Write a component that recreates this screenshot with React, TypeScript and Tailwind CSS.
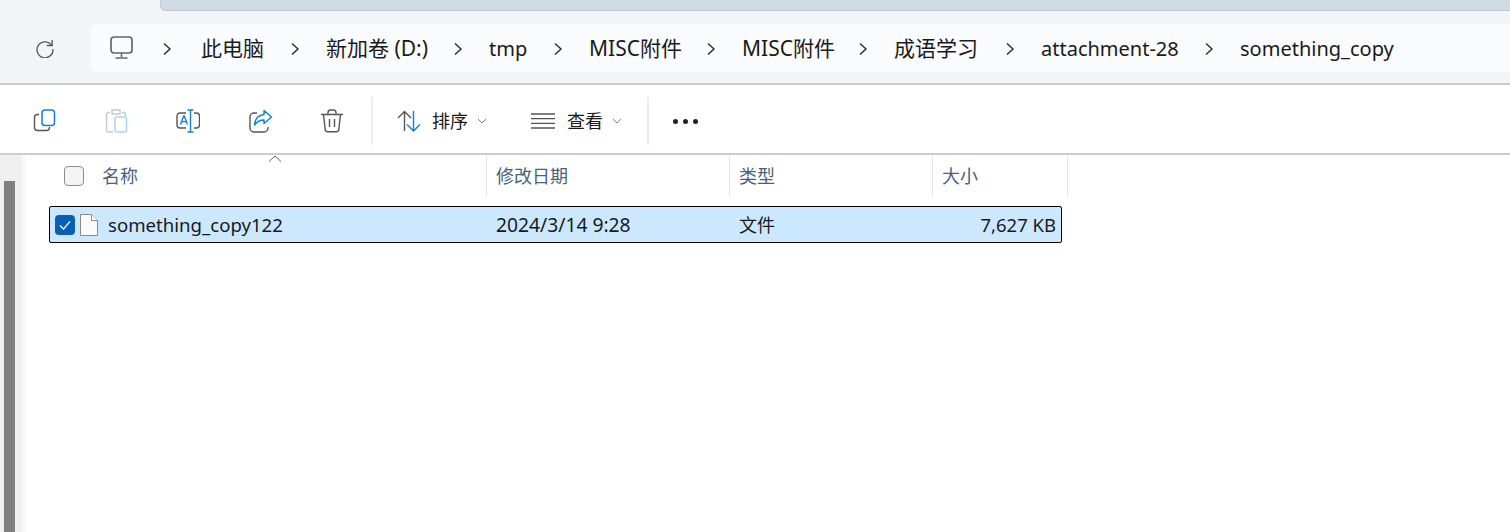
const FONT = '"Noto Sans", "Noto Sans CJK SC", sans-serif'

const CRUMBS = [
  { label: '此电脑', width: 'w-[63px]', size: 'text-[21px]' },
  { label: '新加卷 (D:)', width: 'w-[101px]', size: 'text-[21px]' },
  { label: 'tmp', width: 'w-[38px]', size: 'text-[20px]' },
  { label: 'MISC附件', width: 'w-[91px]', size: 'text-[21px]' },
  { label: 'MISC附件', width: 'w-[90px]', size: 'text-[21px]' },
  { label: '成语学习', width: 'w-[85px]', size: 'text-[21px]' },
  { label: 'attachment-28', width: 'w-[137px]', size: 'text-[20px]' },
]

const COLUMNS = [
  { label: '修改日期', width: 'w-[243px]' },
  { label: '类型', width: 'w-[203px]' },
  { label: '大小', width: 'w-[135px]' },
]

function Chevron() {
  return (
    <svg width="10" height="14" viewBox="0 0 10 14" fill="none" className="shrink-0">
      <path d="M2 1.5 8 7l-6 5.5" stroke="#2b2b2b" strokeWidth="1.4" />
    </svg>
  )
}

function SmallChevron() {
  return (
    <svg width="10" height="6" viewBox="0 0 10 6" fill="none">
      <path d="M1 1l4 4 4-4" stroke="#7a7a7a" strokeWidth="1" />
    </svg>
  )
}

function Divider() {
  return <div className="h-[48px] w-[2px] bg-[#ececec]" />
}

function RefreshIcon() {
  return (
    <svg width="20" height="20" viewBox="0 0 20 20" fill="none">
      <path d="M16.6 7.2A8 8 0 1 0 18 11" stroke="#555" strokeWidth="1.3" />
      <path d="M17.2 2v5.5h-5.4" stroke="#555" strokeWidth="1.3" />
    </svg>
  )
}

function MonitorIcon() {
  return (
    <svg width="24" height="24" viewBox="0 0 24 24" fill="none">
      <rect x="1" y="1" width="21" height="16" rx="3" stroke="#666" strokeWidth="1.7" fill="#fafbfd" />
      <path d="M11.5 17v4M5.5 22h12" stroke="#666" strokeWidth="1.6" />
    </svg>
  )
}

function CopyIcon() {
  return (
    <svg width="24" height="24" viewBox="0 0 24 24" fill="none">
      <path d="M6 5.5H4.5A3 3 0 0 0 1.5 8.5v10a3 3 0 0 0 3 3h9a3 3 0 0 0 3-3V18" stroke="#555" strokeWidth="1.4" />
      <rect x="9" y="1" width="12.5" height="15.5" rx="3" stroke="#0f7fd8" strokeWidth="1.5" fill="#fff" />
    </svg>
  )
}

function PasteIcon() {
  return (
    <svg width="24" height="24" viewBox="0 0 24 24" fill="none">
      <path d="M5 3.5H3.5a2 2 0 0 0-2 2V21a2 2 0 0 0 2 2H8" stroke="#c9c9c9" strokeWidth="1.4" />
      <path d="M7 1h8v4H7z" stroke="#c9c9c9" strokeWidth="1.4" />
      <path d="M17 3.5h1.5a2 2 0 0 1 2 2v2" stroke="#c9c9c9" strokeWidth="1.4" />
      <rect x="10" y="8" width="11.5" height="15" rx="2" stroke="#a9d3f3" strokeWidth="1.5" fill="#fff" />
    </svg>
  )
}

function RenameIcon() {
  return (
    <svg width="24" height="24" viewBox="0 0 24 24" fill="none">
      <path d="M10 4H4a3 3 0 0 0-3 3v9a3 3 0 0 0 3 3h6M18 4h2.500a3 3 0 0 1 3 3v9a3 3 0 0 1-3 3H18" stroke="#555" strokeWidth="1.4" />
      <path d="M11.500 1h6M14.500 1v22M11.500 23h6" stroke="#0f7fd8" strokeWidth="1.4" />
      <path d="M4.500 15.500 7.700 7h.6l3.200 8.500M5.700 12.600h4.600" stroke="#0f7fd8" strokeWidth="1.4" />
    </svg>
  )
}

function ShareIcon() {
  return (
    <svg width="24" height="24" viewBox="0 0 24 24" fill="none">
      <path d="M8 4H5a4 4 0 0 0-4 4v11a4 4 0 0 0 4 4h10a4 4 0 0 0 4-4v-1" stroke="#555" strokeWidth="1.4" />
      <path d="M15 1.500 22.500 8 15 14.500V11C10.500 11 8 12.500 5.500 16c.5-6 4-10 9.500-10.500z" stroke="#0f7fd8" strokeWidth="1.4" strokeLinejoin="round" />
    </svg>
  )
}

function TrashIcon() {
  return (
    <svg width="24" height="24" viewBox="0 0 24 24" fill="none">
      <path d="M1 5.500h22M8 5V3.500A2.500 2.500 0 0 1 10.500 1h3A2.500 2.500 0 0 1 16 3.500V5" stroke="#555" strokeWidth="1.4" />
      <path d="M3.500 5.500l1.700 15a2.500 2.500 0 0 0 2.500 2.300h8.600a2.500 2.500 0 0 0 2.500-2.300l1.700-15" stroke="#555" strokeWidth="1.4" />
      <path d="M9.500 10v8M14.500 10v8" stroke="#555" strokeWidth="1.4" />
    </svg>
  )
}

function SortIcon() {
  return (
    <svg width="24" height="22" viewBox="0 0 24 22" fill="none">
      <path d="M1 8l6.500-6.500L14 8M7.500 2v19" stroke="#555" strokeWidth="1.4" />
      <path d="M10 14.500l6.500 6.500 6.500-6.500M16.500 20V1" stroke="#0f7fd8" strokeWidth="1.4" />
    </svg>
  )
}

function ListIcon() {
  return (
    <svg width="24" height="16" viewBox="0 0 24 16" fill="none">
      <path d="M0 1h24M0 5.700h24M0 10.300h24M0 15h24" stroke="#555" strokeWidth="1.3" />
    </svg>
  )
}

function FileIcon() {
  return (
    <svg width="18" height="22" viewBox="0 0 18 22" fill="none" className="shrink-0">
      <path d="M.5.500h11l6 6v15H.5z" fill="#fbfbfb" stroke="#8a8a8a" />
      <path d="M11.500.500v6h6" fill="#fff" stroke="#8a8a8a" />
    </svg>
  )
}

export default function App() {
  return (
    <div className="flex h-[532px] w-[1510px] flex-col overflow-hidden bg-white text-[#1a1a1a]" style={{ fontFamily: FONT }}>
      {/* Address bar */}
      <div className="flex h-[85px] shrink-0 flex-col border-b-2 border-[#c3ced6] bg-[#f2f4f7]">
        <div className="ml-[160px] h-[11px] shrink-0 rounded-bl-[6px] border-b border-l border-[#bcc8d1] bg-[#d0dbe3]" />
        <div className="flex items-center pt-[13px]">
          <div className="flex w-[90px] justify-center pr-[1px]">
            <RefreshIcon />
          </div>
          <div className="flex h-[48px] flex-1 items-center gap-[28px] rounded-l-[8px] bg-[#fafbfd] pl-[20px] text-[20px]">
            <MonitorIcon />
            <div className="flex items-center gap-[26px] pt-[2px]">
              {CRUMBS.map((c, i) => (
                <div key={i} className={`flex items-center ${i === 0 ? 'gap-[29px]' : 'gap-[26px]'}`}>
                  <Chevron />
                  <span className={`${c.width} ${c.size} whitespace-nowrap`}>{c.label}</span>
                </div>
              ))}
              <Chevron />
              <span className="whitespace-nowrap">something_copy</span>
            </div>
          </div>
        </div>
      </div>

      {/* Command bar */}
      <div className="flex h-[70px] shrink-0 items-center border-b-2 border-[#c3ced6] pl-[33px] pt-[4px]">
        <div className="flex w-[338px] items-center">
          <div className="w-[72px]"><CopyIcon /></div>
          <div className="w-[71px]"><PasteIcon /></div>
          <div className="w-[73px]"><RenameIcon /></div>
          <div className="w-[71px]"><ShareIcon /></div>
          <div className="w-[51px]"><TrashIcon /></div>
        </div>
        <Divider />
        <div className="flex w-[158px] items-center pl-[24px] text-[18px]">
          <SortIcon />
          <span className="ml-[11px] mr-[9px] whitespace-nowrap">排序</span>
          <SmallChevron />
        </div>
        <div className="flex w-[116px] items-center text-[18px]">
          <ListIcon />
          <span className="ml-[12px] mr-[9px] whitespace-nowrap">查看</span>
          <SmallChevron />
        </div>
        <Divider />
        <div className="ml-[24px] mt-[1px] flex gap-[5px]">
          <div className="h-[5px] w-[5px] rounded-full bg-[#222]" />
          <div className="h-[5px] w-[5px] rounded-full bg-[#222]" />
          <div className="h-[5px] w-[5px] rounded-full bg-[#222]" />
        </div>
      </div>

      {/* File list */}
      <div className="flex min-h-0 flex-1">
        <div className="flex w-[22px] shrink-0 flex-col bg-[#f0f0f0] pt-[26px]">
          <div className="ml-[4px] w-[11px] flex-1 bg-[#808080]" />
        </div>
        <div className="w-[4px] shrink-0 bg-[#f9f9f9]" />
        <div className="min-w-0 flex-1">
          <div className="flex h-[42px] text-[18px] text-[#4a5f7c]">
            <div className="relative flex w-[461px] items-center border-r border-[#e5e5e5] pl-[38px]">
              <div className="h-[20px] w-[20px] rounded-[4px] border border-[#8a8a8a] bg-[#f4f4f4]" />
              <span className="ml-[18px]">名称</span>
              <svg width="14" height="7" viewBox="0 0 14 7" fill="none" className="absolute left-[242px] top-0">
                <path d="M1 6.500 7 1l6 5.500" stroke="#666" strokeWidth="1" />
              </svg>
            </div>
            {COLUMNS.map(col => (
              <div key={col.label} className={`flex ${col.width} items-center border-r border-[#e5e5e5] pl-[9px]`}>
                {col.label}
              </div>
            ))}
          </div>
          <div className="ml-[23px] mt-[9px] flex h-[37px] w-[1013px] items-center rounded-[2px] border border-black bg-[#cce8ff] text-[18px]">
            <div className="ml-[5px] flex h-[20px] w-[20px] items-center justify-center rounded-[4px] bg-[#0560b6]">
              <svg width="12" height="10" viewBox="0 0 12 10" fill="none">
                <path d="M1 5.500 4.500 9 11 1.500" stroke="#fff" strokeWidth="1.2" />
              </svg>
            </div>
            <div className="ml-[5px]"><FileIcon /></div>
            <span className="ml-[10px] w-[388px] whitespace-nowrap pt-[1px] text-[18.6px]">something_copy122</span>
            <span className="w-[243px] whitespace-nowrap pt-[1px] text-[19.25px]">2024/3/14 9:28</span>
            <span className="w-[100px] pt-[1px]">文件</span>
            <span className="flex-1 whitespace-nowrap pr-[5px] pt-[1px] text-right text-[18.5px]">7,627 KB</span>
          </div>
        </div>
      </div>
    </div>
  )
}
